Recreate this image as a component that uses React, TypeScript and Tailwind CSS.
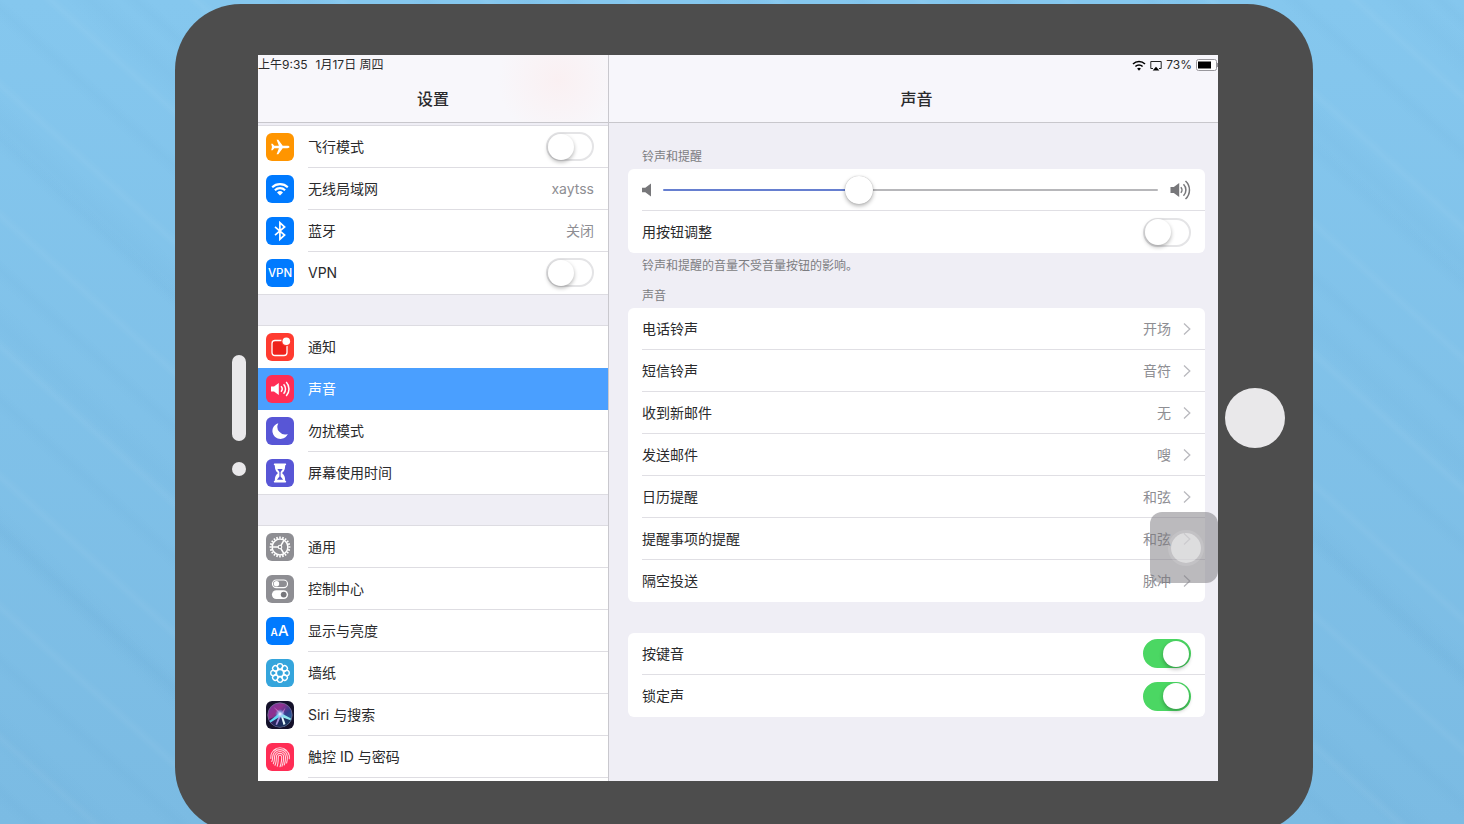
import { useState } from "react";
import type { CSSProperties, ReactNode } from "react";

const petals = [0, 45, 90, 135, 180, 225, 270, 315];
const teeth = Array.from({ length: 20 }, (_, i) => i * 18);

function Tile({ className, children }: { className: string; children: ReactNode }) {
  return (
    <span className={`flex size-7 shrink-0 overflow-hidden rounded-md ${className}`}>
      <svg viewBox="0 0 28 28" className="size-7" fill="none" aria-hidden="true">
        {children}
      </svg>
    </span>
  );
}

const icons = {
  airplane: (
    <Tile className="bg-[#ff9500]">
      <path
        fill="#fff"
        d="M23.5 14c0 .7-1 1.200-2.200 1.200h-4.600l-4.400 6.100h-1.700l2.300-6.100H8.300l-1.700 2.100H5.200l.8-3.300-.8-3.300h1.400l1.700 2.100h4.600l-2.300-6.100h1.700l4.400 6.100h4.600c1.200 0 2.200.5 2.200 1.200z"
      />
    </Tile>
  ),
  wifi: (
    <Tile className="bg-[#007aff]">
      <path d="M6.200 12.300a11.200 11.200 0 0 1 15.600 0" stroke="#fff" strokeWidth="2.100" />
      <path d="M8.900 15.200a7.300 7.300 0 0 1 10.200 0" stroke="#fff" strokeWidth="2.100" />
      <path d="M14 20.600l-3-3.100a4.300 4.300 0 0 1 6 0z" fill="#fff" />
    </Tile>
  ),
  bluetooth: (
    <Tile className="bg-[#007aff]">
      <path d="M9 9.800l9.600 8.200-4.700 4.300V5.700l4.700 4.300L9 18.200" stroke="#fff" strokeWidth="1.700" />
    </Tile>
  ),
  vpn: (
    <Tile className="bg-[#007aff]">
      <text x="14" y="18" textAnchor="middle" fontSize="11.5" fontWeight="500" fill="#fff">
        VPN
      </text>
    </Tile>
  ),
  notifications: (
    <Tile className="bg-[#ff3b30]">
      <rect x="6" y="7.500" width="15" height="15" rx="3" fill="#ee221c" stroke="#fff" strokeWidth="1.300" />
      <circle cx="20.300" cy="8.200" r="5" fill="#ff3b30" />
      <circle cx="20.300" cy="8.200" r="3.800" fill="#fff" />
    </Tile>
  ),
  sound: (
    <Tile className="bg-[#ff2d55]">
      <path d="M5 11.400h3l4.800-3.500v12.200L8 16.600H5z" fill="#fff" />
      <path
        d="M15 11.300a4 4 0 0 1 0 5.400M17.600 9.200a7 7 0 0 1 0 9.600M20.200 7a10.200 10.200 0 0 1 0 14"
        stroke="#fff"
        strokeWidth="1.500"
      />
    </Tile>
  ),
  moon: (
    <Tile className="bg-[#5856d6]">
      <path d="M12.300 6.200A8 8 0 1 0 21.800 17 7.700 7.700 0 0 1 12.300 6.200z" fill="#fff" />
    </Tile>
  ),
  hourglass: (
    <Tile className="bg-[#5856d6]">
      <path
        d="M8.500 4.500h11c.9 0 .9 1.700 0 1.700h-.3c0 4.200-1 6-3.200 7.800 2.200 1.800 3.200 3.600 3.200 7.800h.3c.9 0 .9 1.700 0 1.700h-11c-.9 0-.9-1.700 0-1.700h.3c0-4.200 1-6 3.200-7.800-2.200-1.800-3.200-3.600-3.200-7.800h-.3c-.9 0-.9-1.700 0-1.700z"
        fill="#fff"
      />
      <path d="M11.300 10h5.400l-2.100 2.900v4.700l2.500 3.200h-6.200l2.500-3.200v-4.700z" fill="#5856d6" />
    </Tile>
  ),
  gear: (
    <Tile className="bg-[#8e8e93]">
      {teeth.map((angle) => (
        <path key={angle} d="M14 5.500V3.600" stroke="#fff" strokeWidth="1.600" transform={`rotate(${angle} 14 14)`} />
      ))}
      <circle cx="14" cy="14" r="7.900" stroke="#fff" strokeWidth="1.500" />
      {[60, 180, 300].map((angle) => (
        <path key={angle} d="M14 14h7.500" stroke="#fff" strokeWidth="1.500" transform={`rotate(${angle} 14 14)`} />
      ))}
      <circle cx="14" cy="14" r="1.800" fill="#8e8e93" stroke="#fff" strokeWidth="1.100" />
    </Tile>
  ),
  controls: (
    <Tile className="bg-[#8e8e93]">
      <rect x="6.500" y="5" width="15" height="7.600" rx="3.800" stroke="#fff" strokeWidth="1.200" />
      <circle cx="10.500" cy="8.800" r="2.700" fill="#fff" />
      <rect x="5.900" y="15.200" width="16.200" height="8.800" rx="4.400" fill="#fff" />
      <circle cx="17.700" cy="19.600" r="2.900" fill="#77777c" />
    </Tile>
  ),
  display: (
    <Tile className="bg-[#007aff]">
      <text x="4.500" y="18.500" fontSize="10" fontWeight="600" fill="#fff">
        A
      </text>
      <text x="12" y="18.500" fontSize="15" fontWeight="500" fill="#fff">
        A
      </text>
    </Tile>
  ),
  wallpaper: (
    <Tile className="bg-[#35a5dc]">
      {petals.map((angle) => (
        <circle
          key={angle}
          cx="14"
          cy="7.400"
          r="2.700"
          stroke="#fff"
          strokeWidth="1.300"
          transform={`rotate(${angle} 14 14)`}
        />
      ))}
      <circle cx="14" cy="14" r="3.500" stroke="#fff" strokeWidth="1.300" />
    </Tile>
  ),
  siri: (
    <Tile className="bg-[#15122b]">
      <defs>
        <linearGradient id="siriOrb" x1="0" y1="0" x2="1" y2="1">
          <stop offset="0" stopColor="#8e3cc4" />
          <stop offset=".35" stopColor="#b03aa8" />
          <stop offset=".6" stopColor="#3b4aa8" />
          <stop offset="1" stopColor="#1aa6b8" />
        </linearGradient>
        <radialGradient id="siriGlow">
          <stop offset="0" stopColor="#fff" />
          <stop offset=".4" stopColor="#a9d4ff" stopOpacity=".7" />
          <stop offset="1" stopColor="#5fb4ff" stopOpacity="0" />
        </radialGradient>
      </defs>
      <circle cx="14" cy="14" r="12.200" fill="url(#siriOrb)" opacity=".8" stroke="#8d8bb5" strokeWidth=".8" />
      <path d="M3 18c2 5 6 8 11 8s9-3 11-8l-11-4z" fill="#12183c" opacity=".6" />
      <path d="M14 11.500L3.500 20l1 1.500L15 15z" fill="#62d8f2" />
      <path d="M14 12l3.500 12 2-1L16 13z" fill="#e8fbff" />
      <path d="M14 11.500l11 6-.5 1.800L14 15.500z" fill="#8fe6ee" />
      <path d="M14 12l-4.500 11.500 1.500.5L15.500 14z" fill="#c8a9f5" opacity=".8" />
      <path d="M14 13.500L7.500 6l8 6zM14 13.500l5.500-7-3 8z" fill="#f08be0" opacity=".6" />
      <circle cx="14" cy="13" r="5" fill="url(#siriGlow)" />
    </Tile>
  ),
  fingerprint: (
    <Tile className="bg-[#ff2d55]">
      <g stroke="#ffd3dc" strokeWidth="1.100" strokeLinecap="round">
        <path d="M7.500 7.300a9.500 9.500 0 0 1 13 0" />
        <path d="M4.800 15.500c-.5-4 1.600-7.900 5.200-9.300M18 6.200c3.600 1.700 5.900 5.300 5.300 9.600" />
        <path d="M5.800 18.500c1-2 .8-3 .8-4.500a7.400 7.400 0 0 1 14.800 0c0 2.500-.1 4-.8 6" />
        <path d="M7.300 20.700c1.300-2.500 1.200-4.500 1.200-6.700a5.500 5.500 0 0 1 11 0c0 3-.2 5.500-1.300 8" />
        <path d="M9 22.200c1.300-2.700 1.400-5.200 1.400-8.200a3.600 3.600 0 0 1 7.200 0c0 3.300-.4 6.500-1.700 9.300" />
        <path d="M11.200 23.300c1-3 1.100-6 1.100-9.300a1.700 1.700 0 0 1 3.400 0c0 3.500-.4 6.600-1.700 9.700" />
      </g>
    </Tile>
  ),
};

type MenuItem = {
  icon: keyof typeof icons;
  label: string;
  value?: string;
  toggle?: boolean;
  active?: boolean;
};

const menu: MenuItem[][] = [
  [
    { icon: "airplane", label: "飞行模式", toggle: true },
    { icon: "wifi", label: "无线局域网", value: "xaytss" },
    { icon: "bluetooth", label: "蓝牙", value: "关闭" },
    { icon: "vpn", label: "VPN", toggle: true },
  ],
  [
    { icon: "notifications", label: "通知" },
    { icon: "sound", label: "声音", active: true },
    { icon: "moon", label: "勿扰模式" },
    { icon: "hourglass", label: "屏幕使用时间" },
  ],
  [
    { icon: "gear", label: "通用" },
    { icon: "controls", label: "控制中心" },
    { icon: "display", label: "显示与亮度" },
    { icon: "wallpaper", label: "墙纸" },
    { icon: "siri", label: "Siri 与搜索" },
    { icon: "fingerprint", label: "触控 ID 与密码" },
  ],
];

const tones = [
  ["电话铃声", "开场"],
  ["短信铃声", "音符"],
  ["收到新邮件", "无"],
  ["发送邮件", "嗖"],
  ["日历提醒", "和弦"],
  ["提醒事项的提醒", "和弦"],
  ["隔空投送", "脉冲"],
];

function Toggle({ on = false }: { on?: boolean }) {
  return (
    <input
      type="checkbox"
      role="switch"
      defaultChecked={on}
      className="flex h-[29px] w-12 shrink-0 appearance-none items-center rounded-full border-2 border-[#e4e4e6] bg-white before:size-[26px] before:rounded-full before:bg-white before:shadow-[0_2px_4px_rgba(0,0,0,0.3)] checked:justify-end checked:border-[#4bd763] checked:bg-[#4bd763]"
    />
  );
}

function Chevron() {
  return (
    <svg viewBox="0 0 8 14" className="ml-3 h-3.5 w-2" fill="none" stroke="#b9b9be" strokeWidth="1.3" aria-hidden="true">
      <path d="M1 1.500L6.800 7 1 12.500" />
    </svg>
  );
}

function MenuRow({ item, line }: { item: MenuItem; line: boolean }) {
  const body = (
    <>
      {icons[item.icon]}
      <span
        className={`flex h-full flex-1 items-center justify-between border-b pr-3.5 ${line ? "border-[#dedde2]" : "border-transparent"}`}
      >
        <span>{item.label}</span>
        {item.value && <span className="text-[#8e8e93]">{item.value}</span>}
        {item.toggle && <Toggle />}
      </span>
    </>
  );
  const row = "flex h-[42px] items-center gap-3.5 pl-2";

  if (item.toggle) {
    return <label className={row}>{body}</label>;
  }
  return (
    <a href="#" className={`${row} ${item.active ? "bg-[#4a9fff] text-white" : ""}`}>
      {body}
    </a>
  );
}

function Sidebar() {
  return (
    <aside className="border-r border-[#c9c8ce] bg-[#efeef5]">
      <header className="border-b border-[#c8c7cc] bg-[#f8f7fb] bg-[radial-gradient(ellipse_60px_60px_at_300px_25px,#faf0f2,transparent)]">
        <div className="flex h-5 items-center gap-2 text-xs">
          <span>上午9:35</span>
          <span>1月17日 周四</span>
        </div>
        <h2 className="flex h-[47px] items-center justify-center text-base font-medium">设置</h2>
      </header>
      <nav className="flex flex-col gap-8 pt-[3px]">
        {menu.map((group, g) => (
          <div key={g} className="bg-white shadow-[0_-1px_0_#dddce2,0_1px_0_#dddce2]">
            {group.map((item, i) => (
              <MenuRow
                key={item.label}
                item={item}
                line={!item.active && !group[i + 1]?.active && (i < group.length - 1 || g === menu.length - 1)}
              />
            ))}
            {g === menu.length - 1 && <div className="h-[3px]" />}
          </div>
        ))}
      </nav>
    </aside>
  );
}

function StatusIcons() {
  return (
    <div className="flex h-5 items-center justify-end gap-1 text-xs">
      <svg viewBox="0 0 14 11" className="h-[11px] w-3.5" fill="none" stroke="#000" strokeWidth="1.600" aria-hidden="true">
        <path d="M1 4a8.500 8.500 0 0 1 12 0M3.400 6.500a5.100 5.100 0 0 1 7.200 0" />
        <path d="M7 10.700L5.100 8.600a2.800 2.800 0 0 1 3.800 0z" fill="#000" stroke="none" />
      </svg>
      <svg viewBox="0 0 12 11" className="h-[11px] w-3" fill="none" aria-hidden="true">
        <path d="M3 8.500H.8V1.500h10.400v7H9" stroke="#222" strokeLinejoin="round" />
        <path d="M6 6.800l3.300 3.700H2.700z" fill="#000" />
      </svg>
      <span>73%</span>
      <svg viewBox="0 0 22 12" className="h-3 w-[22px]" aria-hidden="true">
        <rect x=".5" y=".5" width="20" height="11" rx="2" fill="#fff" stroke="#98979c" />
        <path d="M21.500 4v4" stroke="#98979c" />
        <rect x="2" y="2.500" width="13" height="7" fill="#000" />
      </svg>
    </div>
  );
}

function VolumeSlider() {
  const [volume, setVolume] = useState(39);
  return (
    <div className="flex h-[42px] items-center border-b border-[#e0dfe4] pr-3.5">
      <svg viewBox="0 0 10 14" className="h-3.5 w-2.5" fill="#77777a" aria-hidden="true">
        <path d="M0 4.700h3.300L9 .5v13L3.300 9.300H0z" />
      </svg>
      <input
        type="range"
        aria-label="铃声和提醒"
        value={volume}
        onChange={(e) => setVolume(Number(e.target.value))}
        style={{ "--fill": `${volume}%` } as CSSProperties}
        className="mr-3 ml-[11px] h-7 min-w-0 flex-1 appearance-none bg-transparent [&::-webkit-slider-runnable-track]:h-0.5 [&::-webkit-slider-runnable-track]:rounded-full [&::-webkit-slider-runnable-track]:bg-[linear-gradient(to_right,#667fd0_var(--fill),#b7b7ba_var(--fill))] [&::-webkit-slider-thumb]:-mt-[13px] [&::-webkit-slider-thumb]:size-7 [&::-webkit-slider-thumb]:appearance-none [&::-webkit-slider-thumb]:rounded-full [&::-webkit-slider-thumb]:bg-white [&::-webkit-slider-thumb]:shadow-[0_2px_4px_rgba(0,0,0,0.3),0_0_1px_rgba(0,0,0,0.3)]"
      />
      <svg viewBox="0 0 21 20" className="h-5 w-[21px]" fill="none" stroke="#77777a" strokeWidth="1.500" aria-hidden="true">
        <path d="M.5 7h3.300L9.200 3v14l-5.400-4H.5z" fill="#77777a" stroke="none" />
        <path d="M10.800 7.200a4 4 0 0 1 0 5.600M13.500 4.200a8.200 8.200 0 0 1 0 11.600M15.500 1a12.200 12.200 0 0 1 0 18" />
      </svg>
    </div>
  );
}

function SwitchRow({ label, on, line }: { label: string; on?: boolean; line?: boolean }) {
  return (
    <label className={`flex h-[42px] items-center justify-between pr-3.5 ${line ? "border-b border-[#e0dfe4]" : ""}`}>
      <span>{label}</span>
      <Toggle on={on} />
    </label>
  );
}

function SoundPane() {
  return (
    <main className="flex min-w-0 flex-col bg-[#efeef5]">
      <header className="border-b border-[#c8c7cc] bg-[#f7f6fb]">
        <StatusIcons />
        <h1 className="flex h-[47px] items-center justify-center pr-[13px] pl-[19px] text-base font-medium">声音</h1>
      </header>
      <div className="pr-[13px] pl-[19px]">
        <h3 className="pt-[26px] pb-1 pl-3.5 text-xs text-[#7c7c81]">铃声和提醒</h3>
        <section className="rounded-md bg-white pl-3.5">
          <VolumeSlider />
          <SwitchRow label="用按钮调整" />
        </section>
        <p className="pt-[5px] pl-3.5 text-xs text-[#7c7c81]">铃声和提醒的音量不受音量按钮的影响。</p>
        <h3 className="pt-3.5 pb-1 pl-3.5 text-xs text-[#7c7c81]">声音</h3>
        <section className="rounded-md bg-white pl-3.5">
          {tones.map(([label, value], i) => (
            <a
              key={label}
              href="#"
              className={`flex h-[42px] items-center pr-3.5 ${i < tones.length - 1 ? "border-b border-[#e0dfe4]" : ""}`}
            >
              <span className="flex-1">{label}</span>
              <span className="text-[#8e8e93]">{value}</span>
              <Chevron />
            </a>
          ))}
        </section>
        <section className="mt-[31px] rounded-md bg-white pl-3.5">
          <SwitchRow label="按键音" on line />
          <SwitchRow label="锁定声" on />
        </section>
      </div>
    </main>
  );
}

export default function App() {
  return (
    <div
      lang="zh-CN"
      className="h-screen overflow-hidden bg-[#7fc1e9] bg-[repeating-linear-gradient(42deg,transparent_0_13px,rgba(60,130,180,0.04)_24px,transparent_33px_58px,rgba(255,255,255,0.04)_64px,transparent_71px_97px),repeating-linear-gradient(43deg,transparent_0_51px,rgba(60,130,180,0.04)_68px,transparent_86px_149px),linear-gradient(to_bottom,#85c7ee,#7bbbe3)] pt-1 pr-[151px] pl-[175px] font-['Inter','Noto_Sans_CJK_SC',sans-serif] text-sm text-[#2a2a2c]"
    >
      <div className="flex items-center rounded-[66px] bg-[#4d4d4d] pt-[51px] pb-[52px]">
        <div className="flex w-[83px] shrink-0 flex-col items-end gap-[21px] pr-3 pb-1.5">
          <span className="h-[86px] w-3.5 rounded-full bg-[#e9e8ea]" />
          <span className="size-3.5 rounded-full bg-[#e9e8ea]" />
        </div>
        <div className="relative grid min-w-0 flex-1 grid-cols-[351px_1fr] overflow-hidden">
          <Sidebar />
          <SoundPane />
          <button
            type="button"
            aria-label="辅助触控"
            className="absolute top-[457px] right-0 flex h-[71px] w-[68px] items-center justify-center rounded-xl bg-[#77767c]/50 pl-1"
          >
            <span className="size-[30px] rounded-full bg-white/50 shadow-[0_0_0_3px_rgba(255,255,255,0.12)]" />
          </button>
        </div>
        <div className="flex w-[95px] shrink-0 pl-[7px]">
          <button type="button" aria-label="主屏幕" className="size-[60px] rounded-full bg-[#e9e8ea]" />
        </div>
      </div>
    </div>
  );
}
